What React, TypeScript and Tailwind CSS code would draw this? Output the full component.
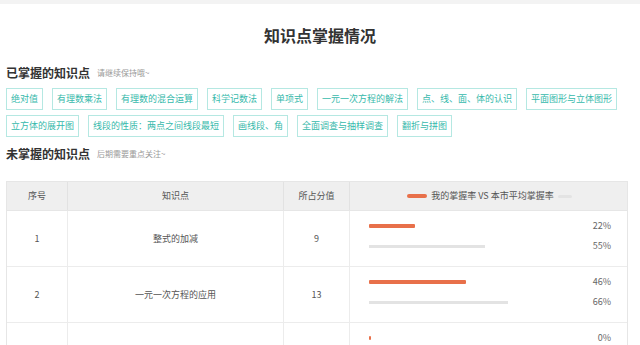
import React from "react";

const mastered1 = ["绝对值", "有理数乘法", "有理数的混合运算", "科学记数法", "单项式", "一元一次方程的解法", "点、线、面、体的认识", "平面图形与立体图形", "立方体的展开图", "线段的性质：两点之间线段最短", "画线段、角", "全面调查与抽样调查", "翻折与拼图"];

const rows = [
  { no: "1", name: "整式的加减", score: "9", mine: 22, avg: 55 },
  { no: "2", name: "一元一次方程的应用", score: "13", mine: 46, avg: 66 },
  { no: "3", name: "合并同类项", score: "8", mine: 0, avg: 48 },
];

const FULL = 210;

export default function App() {
  return (
    <div
      className="w-[640px] h-[345px] overflow-hidden bg-white text-[#333]"
      style={{ fontFamily: '"Noto Sans CJK SC", "Noto Sans", sans-serif' }}
    >
      <div className="h-[4px] bg-[#f3f3f3]" />
      <h1 className="mt-[21px] text-center text-[16px] leading-[20px] font-bold text-[#333]">知识点掌握情况</h1>

      <div className="mt-[20px] ml-[6px] flex items-center h-[16px]">
        <span className="text-[12px] leading-[16px] font-bold text-[#333]">已掌握的知识点</span>
        <span className="ml-[7px] text-[8px] leading-[16px] text-[#999]">请继续保持哦~</span>
      </div>

      <div className="mt-[7px] ml-[6px] mr-[6px] flex flex-wrap gap-x-[9px] gap-y-[5px]">
        {mastered1.map((t) => (
          <span
            key={t}
            className="h-[22px] px-[4px] border border-[#b5e8e2] text-[#36b9ab] text-[9px] leading-[20px] whitespace-nowrap"
          >
            {t}
          </span>
        ))}
      </div>

      <div className="mt-[9px] ml-[6px] flex items-center h-[16px]">
        <span className="text-[12px] leading-[16px] font-bold text-[#333]">未掌握的知识点</span>
        <span className="ml-[7px] text-[8px] leading-[16px] text-[#999]">后期需要重点关注~</span>
      </div>

      <div className="mt-[19px] ml-[6px] w-[622px] border-l border-r border-t border-[#e6e6e6] text-[9px] text-[#555]">
        <div className="grid grid-cols-[61px_216px_66px_279px] h-[29px] bg-[#efefef] border-b border-[#e6e6e6]">
          <div className="flex items-center justify-center border-r border-[#e2e2e2]">序号</div>
          <div className="flex items-center justify-center border-r border-[#e2e2e2]">知识点</div>
          <div className="flex items-center justify-center border-r border-[#e2e2e2]">所占分值</div>
          <div className="flex items-center justify-center">
            <span className="w-[20px] h-[4px] rounded-full bg-[#e8704a] mr-[4px]" />
            <span>我的掌握率 VS 本市平均掌握率</span>
            <span className="w-[14px] h-[3px] rounded-full bg-[#e3e3e3] ml-[4px]" />
          </div>
        </div>
        {rows.map((r) => (
          <div key={r.no} className="grid grid-cols-[61px_216px_66px_279px] h-[56px] border-b border-[#ececec]">
            <div className="flex items-center justify-center border-r border-[#ececec]">{r.no}</div>
            <div className="flex items-center justify-center border-r border-[#ececec]">{r.name}</div>
            <div className="flex items-center justify-center border-r border-[#ececec]">{r.score}</div>
            <div className="pt-[5px] pl-[19px] pr-[18px] text-[#666]">
              <div className="h-[20px] flex items-center justify-between">
                <div className="w-[210px] h-[4px] flex">
                  <div
                    className="h-[4px] bg-[#e8704a] rounded-[1px]"
                    style={{ width: r.mine === 0 ? 2 : (FULL * r.mine) / 100 }}
                  />
                </div>
                <span>{r.mine}%</span>
              </div>
              <div className="h-[20px] flex items-center justify-between">
                <div className="w-[210px] h-[3px] flex">
                  <div className="h-[3px] bg-[#e3e3e3]" style={{ width: (FULL * r.avg) / 100 }} />
                </div>
                <span>{r.avg}%</span>
              </div>
            </div>
          </div>
        ))}
      </div>
    </div>
  );
}
